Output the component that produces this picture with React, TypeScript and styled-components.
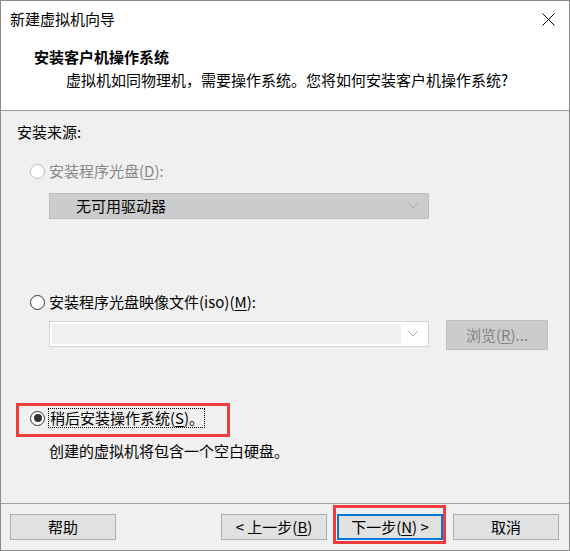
import React from "react";
import styled, { createGlobalStyle } from "styled-components";

const GlobalStyle = createGlobalStyle`
  html, body {
    margin: 0;
    padding: 0;
    background: #ffffff;
  }
  body {
    font-family: "Noto Sans CJK SC", "Noto Sans", sans-serif;
    font-size: 15px;
    color: #000000;
  }
`;

const Chevron = () => (
  <svg width="10" height="6" viewBox="0 0 10 6">
    <polyline
      points="0.5,0.5 5,5 9.5,0.5"
      fill="none"
      stroke="#a6a6a6"
      strokeWidth="1"
    />
  </svg>
);

const CloseIcon = () => (
  <svg width="13" height="13" viewBox="0 0 13 13">
    <path d="M0.5 0.5 L12.5 12.5 M12.5 0.5 L0.5 12.5" stroke="#000" strokeWidth="1" />
  </svg>
);

const App = () => (
  <>
    <GlobalStyle />
    <Window>
      <Header>
        <TitleBar>
          <WindowTitle>新建虚拟机向导</WindowTitle>
          <CloseButton>
            <CloseIcon />
          </CloseButton>
        </TitleBar>
        <Heading>安装客户机操作系统</Heading>
        <SubHeading>
          虚拟机如同物理机，需要操作系统。您将如何安装客户机操作系统?
        </SubHeading>
      </Header>

      <Body>
        <SourceLabel>安装来源:</SourceLabel>

        <OptionRow $top={17}>
          <Radio $disabled />
          <OptionText $disabled>
            安装程序光盘(<Key>D</Key>):
          </OptionText>
        </OptionRow>
        <DriveSelect $top={11}>
          <DriveText>无可用驱动器</DriveText>
          <ArrowZone>
            <Chevron />
          </ArrowZone>
        </DriveSelect>

        <OptionRow $top={72}>
          <Radio />
          <OptionText>
            安装程序光盘映像文件(iso)(<Key>M</Key>):
          </OptionText>
        </OptionRow>
        <PathRow>
          <PathCombo>
            <PathEdit />
            <ArrowZone>
              <Chevron />
            </ArrowZone>
          </PathCombo>
          <BrowseButton>
            浏览(<Key>R</Key>)...
          </BrowseButton>
        </PathRow>

        <MarkedOption $inset="-4px -25px -8px -14px">
          <InnerRow $top={0}>
            <Radio $checked />
            <FocusLabel>
              稍后安装操作系统(<Key>S</Key>)。
            </FocusLabel>
          </InnerRow>
        </MarkedOption>
        <Note>创建的虚拟机将包含一个空白硬盘。</Note>
      </Body>

      <Footer>
        <DialogButton>帮助</DialogButton>
        <Spacer />
        <DialogButton>
          &lt; 上一步(<Key>B</Key>)
        </DialogButton>
        <Marked $inset="-9px -3px -4px -4px">
          <DialogButton $primary>
            下一步(<Key>N</Key>) &gt;
          </DialogButton>
        </Marked>
        <DialogButton>取消</DialogButton>
      </Footer>
    </Window>
  </>
);

export default App;

const Window = styled.div`
  width: 570px;
  height: 551px;
  box-sizing: border-box;
  border: 1px solid #8a8a8a;
  display: flex;
  flex-direction: column;
  background: #f0f0f0;
  overflow: hidden;
`;

const Header = styled.div`
  height: 110px;
  box-sizing: border-box;
  background: #ffffff;
  border-bottom: 1px solid #a0a0a0;
  display: flex;
  flex-direction: column;
`;

const TitleBar = styled.div`
  height: 36px;
  display: flex;
  align-items: center;
  justify-content: space-between;
  padding: 0 14px 0 9px;
`;

const WindowTitle = styled.span`
  line-height: 20px;
`;

const CloseButton = styled.span`
  display: flex;
  width: 13px;
  height: 13px;
`;

const Heading = styled.div`
  margin-top: 9px;
  padding-left: 33px;
  height: 22px;
  line-height: 22px;
  font-weight: bold;
`;

const SubHeading = styled.div`
  margin-top: 1px;
  padding-left: 65px;
  height: 22px;
  line-height: 22px;
`;

const Body = styled.div`
  height: 392px;
  box-sizing: border-box;
  padding-top: 10px;
  display: flex;
  flex-direction: column;
  align-items: flex-start;
`;

const SourceLabel = styled.div`
  margin-left: 16px;
  height: 22px;
  line-height: 22px;
`;

const OptionRow = styled.div<{ $top: number }>`
  margin-top: ${(p) => p.$top}px;
  margin-left: 29px;
  height: 22px;
  display: flex;
  align-items: center;
  gap: 3px;
`;

const InnerRow = styled(OptionRow)`
  margin-left: 0;
`;

const Radio = styled.span<{ $checked?: boolean; $disabled?: boolean }>`
  width: 15px;
  height: 15px;
  box-sizing: border-box;
  border-radius: 50%;
  border: 1px solid ${(p) => (p.$disabled ? "#bcbcbc" : "#333333")};
  background: #ffffff;
  display: flex;
  align-items: center;
  justify-content: center;
  flex-shrink: 0;

  &::after {
    content: "";
    display: ${(p) => (p.$checked ? "block" : "none")};
    width: 8px;
    height: 8px;
    border-radius: 50%;
    background: #333333;
  }
`;

const OptionText = styled.span<{ $disabled?: boolean }>`
  padding-left: 1px;
  line-height: 20px;
  color: ${(p) => (p.$disabled ? "#888888" : "#000000")};
`;

const FocusLabel = styled.span`
  height: 20px;
  box-sizing: border-box;
  padding-left: 1px;
  line-height: 18px;
  border: 1px dotted #000000;
`;

const Key = styled.u`
  text-decoration: underline;
  text-underline-offset: 2px;
`;

const DriveSelect = styled.div<{ $top: number }>`
  margin-top: ${(p) => p.$top}px;
  margin-left: 48px;
  width: 380px;
  height: 26px;
  box-sizing: border-box;
  background: #cccccc;
  border: 1px solid #bfbfbf;
  display: flex;
  align-items: center;
`;

const DriveText = styled.span`
  flex: 1;
  padding-left: 26px;
  line-height: 20px;
`;

const ArrowZone = styled.span`
  width: 24px;
  display: flex;
  align-items: center;
  justify-content: center;
  padding-right: 3px;
`;

const PathRow = styled.div`
  margin-top: 7px;
  margin-left: 48px;
  display: flex;
  align-items: flex-start;
  gap: 17px;
`;

const PathCombo = styled.div`
  margin-top: 1px;
  width: 380px;
  height: 26px;
  box-sizing: border-box;
  background: #ffffff;
  border: 1px solid #d4d4d4;
  padding: 2px 0 2px 2px;
  display: flex;
  align-items: center;
`;

const PathEdit = styled.span`
  flex: 1;
  height: 20px;
  background: #f0f0f0;
`;

const BrowseButton = styled.div`
  width: 102px;
  height: 30px;
  box-sizing: border-box;
  background: #cccccc;
  border: 1px solid #bfbfbf;
  color: #838383;
  display: flex;
  align-items: center;
  justify-content: center;
  line-height: 20px;
`;

const Marked = styled.div<{ $inset: string }>`
  position: relative;
  display: flex;

  &::after {
    content: "";
    position: absolute;
    inset: ${(p) => p.$inset};
    border: 3px solid #ee3b3b;
    pointer-events: none;
  }
`;

const MarkedOption = styled(Marked)`
  margin-top: 57px;
  margin-left: 29px;
`;

const Note = styled.div`
  margin-top: 11px;
  margin-left: 48px;
  height: 22px;
  line-height: 22px;
`;

const Footer = styled.div`
  flex: 1;
  box-sizing: border-box;
  border-top: 1px solid #a0a0a0;
  padding: 10px 10px 0 9px;
  display: flex;
  align-items: flex-start;
  gap: 10px;
`;

const Spacer = styled.span`
  flex: 1;
`;

const DialogButton = styled.button<{ $primary?: boolean }>`
  width: 106px;
  height: 26px;
  box-sizing: border-box;
  margin: 0;
  padding: 0;
  background: #e1e1e1;
  border: ${(p) => (p.$primary ? "2px solid #0078d7" : "1px solid #adadad")};
  font-family: inherit;
  font-size: 15px;
  line-height: 20px;
  color: #000000;
`;
